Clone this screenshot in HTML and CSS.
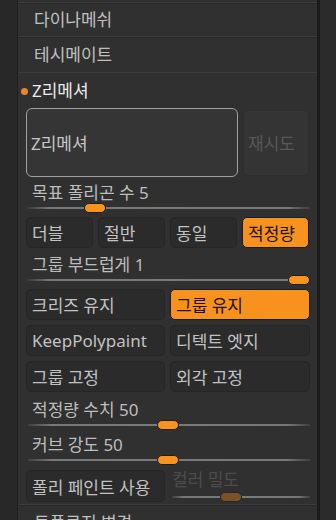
FILE: index.html
```html
<!DOCTYPE html>
<html lang="ko">
<head>
<meta charset="utf-8">
<link rel="stylesheet" href="styles.css">
</head>
<body>
<div class="frame">
  <div class="left-strip"></div>
  <div class="panel">
    <div class="menu-row first"><span class="menu-text">다이나메쉬</span></div>
    <div class="menu-row"><span class="menu-text">테시메이트</span></div>
    <div class="section">
      <div class="section-head"><span class="dot"></span><span class="head-text">Z리메셔</span></div>
      <div class="section-body">
        <div class="big-row">
          <div class="big-btn">Z리메셔</div>
          <div class="retry-btn">재시도</div>
        </div>
        <div class="slider-block pad6">
          <div class="label">목표 폴리곤 수 5</div>
          <div class="slider"><div class="track"></div><div class="thumb" style="left:58px"></div></div>
        </div>
        <div class="btn-row four gap-top4">
          <div class="btn">더블</div>
          <div class="btn">절반</div>
          <div class="btn">동일</div>
          <div class="btn on">적정량</div>
        </div>
        <div class="slider-block pad7">
          <div class="label">그룹 부드럽게 1</div>
          <div class="slider"><div class="track"></div><div class="thumb" style="left:262px"></div></div>
        </div>
        <div class="btn-row two gap-top4">
          <div class="btn">크리즈 유지</div>
          <div class="btn on">그룹 유지</div>
        </div>
        <div class="btn-row two gap-top5">
          <div class="btn">KeepPolypaint</div>
          <div class="btn">디텍트 엣지</div>
        </div>
        <div class="btn-row two gap-top5">
          <div class="btn">그룹 고정</div>
          <div class="btn">외각 고정</div>
        </div>
        <div class="slider-block pad8">
          <div class="label">적정량 수치 50</div>
          <div class="slider"><div class="track"></div><div class="thumb" style="left:131px"></div></div>
        </div>
        <div class="slider-block pad5">
          <div class="label">커브 강도 50</div>
          <div class="slider"><div class="track"></div><div class="thumb" style="left:131px"></div></div>
        </div>
        <div class="btn-row two gap-top5">
          <div class="btn">폴리 페인트 사용</div>
          <div class="mini-slider">
            <div class="label dim">컬러 밀도</div>
            <div class="slider short"><div class="track"></div><div class="thumb dimthumb" style="left:50px"></div></div>
          </div>
        </div>
      </div>
    </div>
    <div class="menu-row"><span class="menu-text">토폴로지 변경</span></div>
  </div>
  <div class="right-edge"></div>
  <div class="right-strip"></div>
</div>
</body>
</html>
```
FILE: styles.css
```css
html, body {
  margin: 0;
  padding: 0;
  background: #2a2a2a;
}
body {
  font-family: "Noto Sans", "Noto Sans CJK KR", sans-serif;
  font-size: 17px;
  color: #c2c2c2;
  width: 336px;
  height: 520px;
  overflow: hidden;
}
.frame {
  display: flex;
  height: 520px;
}
.left-strip {
  width: 17px;
  background: #282828;
  border-right: 1px solid #1f1f1f;
}
.panel {
  width: 299px;
  background: #303030;
  padding-top: 2px;
  overflow: hidden;
}
.right-edge {
  width: 3px;
  background: #1b1b1b;
}
.right-strip {
  flex: 1;
  background: #2b2b2b;
}
.menu-row {
  height: 36px;
  box-sizing: border-box;
  border-top: 1px solid #3c3c3c;
  box-shadow: inset 0 1px 0 #2a2a2a;
  display: flex;
  align-items: center;
  padding-left: 16px;
}
.menu-row.first {
  height: 34px;
}
.menu-text {
  color: #c0c0c0;
  line-height: 20px;
}
.section {
  border-top: 1px solid #3c3c3c;
}
.section-head {
  height: 35px;
  display: flex;
  align-items: center;
  padding-left: 3px;
  gap: 4px;
}
.dot {
  width: 7px;
  height: 7px;
  border-radius: 50%;
  background: #e8862a;
  margin-top: 2px;
}
.head-text {
  color: #ececec;
  line-height: 20px;
}
.section-body {
  padding: 0 7px 3px 8px;
  display: flex;
  flex-direction: column;
}
.big-row {
  display: flex;
  gap: 5px;
  height: 69px;
  align-items: center;
}
.big-btn {
  width: 212px;
  height: 69px;
  box-sizing: border-box;
  border: 1px solid #a2a2a2;
  border-radius: 6px;
  background: #353535;
  display: flex;
  align-items: center;
  padding-left: 4px;
  color: #c6c6c6;
}
.retry-btn {
  width: 66px;
  height: 66px;
  box-sizing: border-box;
  border-radius: 5px;
  background: #343434;
  border: 1px solid #2e2e2e;
  display: flex;
  align-items: center;
  padding-left: 4px;
  color: #585858;
}
.slider-block {
  display: flex;
  flex-direction: column;
}
.pad5 { padding-top: 5px; }
.pad6 { padding-top: 6px; }
.pad7 { padding-top: 7px; }
.pad8 { padding-top: 8px; }
.label {
  line-height: 20px;
  height: 20px;
  padding-left: 6px;
  color: #bdbdbd;
  white-space: nowrap;
}
.label.dim {
  color: #4c4c4c;
  padding-left: 2px;
}
.slider {
  position: relative;
  height: 10px;
}
.track {
  position: absolute;
  left: 2px;
  right: 0;
  top: 4px;
  height: 2px;
  background: linear-gradient(to right, rgba(120,120,120,0.2), #777 8%, #7a7a7a 50%, #777 92%, rgba(120,120,120,0.2));
}
.thumb {
  position: absolute;
  top: 0;
  width: 22px;
  height: 10px;
  box-sizing: border-box;
  border-radius: 5px;
  background: #f7931e;
  border: 1px solid #1e1e1e;
}
.thumb.dimthumb {
  background: #7c5224;
  border-color: #262626;
}
.btn-row {
  display: grid;
  gap: 5px;
  height: 31px;
}
.btn-row.four {
  grid-template-columns: repeat(4, 67px);
}
.btn-row.two {
  grid-template-columns: 139px 140px;
}
.gap-top4 { margin-top: 4px; }
.gap-top5 { margin-top: 5px; }
.btn {
  box-sizing: border-box;
  border-radius: 5px;
  background: #2b2b2b;
  border: 1px solid #262626;
  display: flex;
  align-items: center;
  padding-left: 5px;
  color: #c2c2c2;
  white-space: nowrap;
  overflow: hidden;
}
.btn.on {
  background: #f8921e;
  border-color: #1a1a1a;
  color: #1b1208;
}
.mini-slider {
  display: flex;
  flex-direction: column;
  padding-top: 0px;
}
.slider.short {
  margin-top: 2px;
}
```
